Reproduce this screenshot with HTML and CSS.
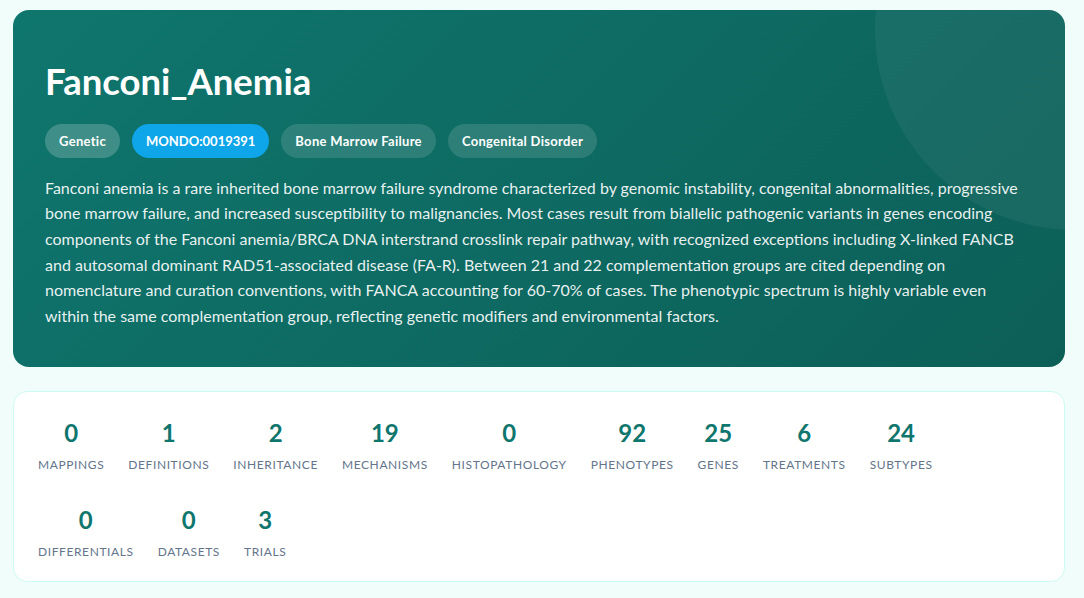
FILE: index.html
```html
<!DOCTYPE html>
<html lang="en">
<head>
  <meta charset="UTF-8">
  <title>Fanconi_Anemia</title>
  <link rel="stylesheet" href="styles.css">
</head>
<body>

<div class="page">
  <div class="hero">
    <h1>Fanconi_Anemia</h1>
    <div class="tags">
      <span class="tag tag-type">Genetic</span>
      <span class="tag tag-id">MONDO:0019391</span>
      <span class="tag">Bone Marrow Failure</span>
      <span class="tag">Congenital Disorder</span>
    </div>
    <p class="description">Fanconi anemia is a rare inherited bone marrow failure syndrome characterized by genomic instability, congenital abnormalities, progressive bone marrow failure, and increased susceptibility to malignancies. Most cases result from biallelic pathogenic variants in genes encoding components of the Fanconi anemia/BRCA DNA interstrand crosslink repair pathway, with recognized exceptions including X-linked FANCB and autosomal dominant RAD51-associated disease (FA-R). Between 21 and 22 complementation groups are cited depending on nomenclature and curation conventions, with FANCA accounting for 60-70% of cases. The phenotypic spectrum is highly variable even within the same complementation group, reflecting genetic modifiers and environmental factors.</p>
  </div>

  <div class="stats">
    <div class="stat"><div class="stat-value">0</div><div class="stat-label">Mappings</div></div>
    <div class="stat"><div class="stat-value">1</div><div class="stat-label">Definitions</div></div>
    <div class="stat"><div class="stat-value">2</div><div class="stat-label">Inheritance</div></div>
    <div class="stat"><div class="stat-value">19</div><div class="stat-label">Mechanisms</div></div>
    <div class="stat"><div class="stat-value">0</div><div class="stat-label">Histopathology</div></div>
    <div class="stat"><div class="stat-value">92</div><div class="stat-label">Phenotypes</div></div>
    <div class="stat"><div class="stat-value">25</div><div class="stat-label">Genes</div></div>
    <div class="stat"><div class="stat-value">6</div><div class="stat-label">Treatments</div></div>
    <div class="stat"><div class="stat-value">24</div><div class="stat-label">Subtypes</div></div>
    <div class="stat"><div class="stat-value">0</div><div class="stat-label">Differentials</div></div>
    <div class="stat"><div class="stat-value">0</div><div class="stat-label">Datasets</div></div>
    <div class="stat"><div class="stat-value">3</div><div class="stat-label">Trials</div></div>
  </div>
</div>

</body>
</html>
```

FILE: styles.css
```css
* {
  box-sizing: border-box;
}

html, body {
  margin: 0;
  padding: 0;
  font-family: 'Lato', 'Noto Sans', sans-serif;
  background: #f0fdfa;
  color: #1e293b;
}

.page {
  padding: 10px 19px 0 13px;
  display: flex;
  flex-direction: column;
  gap: 24px;
}

.hero {
  position: relative;
  overflow: hidden;
  background: linear-gradient(135deg, #0f766e 0%, #0c5f57 100%);
  border-radius: 16px;
  padding: 48px 32px 39px;
  color: white;
}

/* circulo decorativo arriba a la derecha */
.hero::before {
  content: "";
  position: absolute;
  top: -180px;
  right: -210px;
  width: 400px;
  height: 400px;
  border-radius: 50%;
  background: rgba(255,255,255,0.05);
}

.hero h1 {
  margin: 0 0 19px;
  font-size: 36.5px;
  font-weight: 700;
  line-height: 1.28;
}

.tags {
  display: flex;
  gap: 12px;
  margin-bottom: 17px;
}

.tag {
  display: inline-flex;
  align-items: center;
  height: 34px;
  padding: 0 14px;
  border-radius: 17px;
  background: rgba(255,255,255,0.13);
  font-size: 13px;
  font-weight: 700;
  letter-spacing: 0.3px;
}

.tag-type {
  background: rgba(255,255,255,0.2);
}

.tag-id {
  background: #0ea5e9;
  letter-spacing: 0;
}

.description {
  position: relative;
  margin: 0;
  font-size: 16px;
  line-height: 1.6;
  color: rgba(255,255,255,0.92);
}

.stats {
  display: flex;
  flex-wrap: wrap;
  gap: 32px 24px;
  padding: 27px 24px 20px;
  background: white;
  border: 1px solid #ccfbf1;
  border-radius: 14px;
}

.stat {
  display: flex;
  flex-direction: column;
  align-items: center;
}

.stat-value {
  font-size: 24px;
  font-weight: 700;
  line-height: 1.2;
  color: #0f766e;
}

.stat-label {
  margin-top: 8px;
  font-size: 12px;
  line-height: 18px;
  text-transform: uppercase;
  letter-spacing: 0.6px;
  color: #64748b;
}
```
